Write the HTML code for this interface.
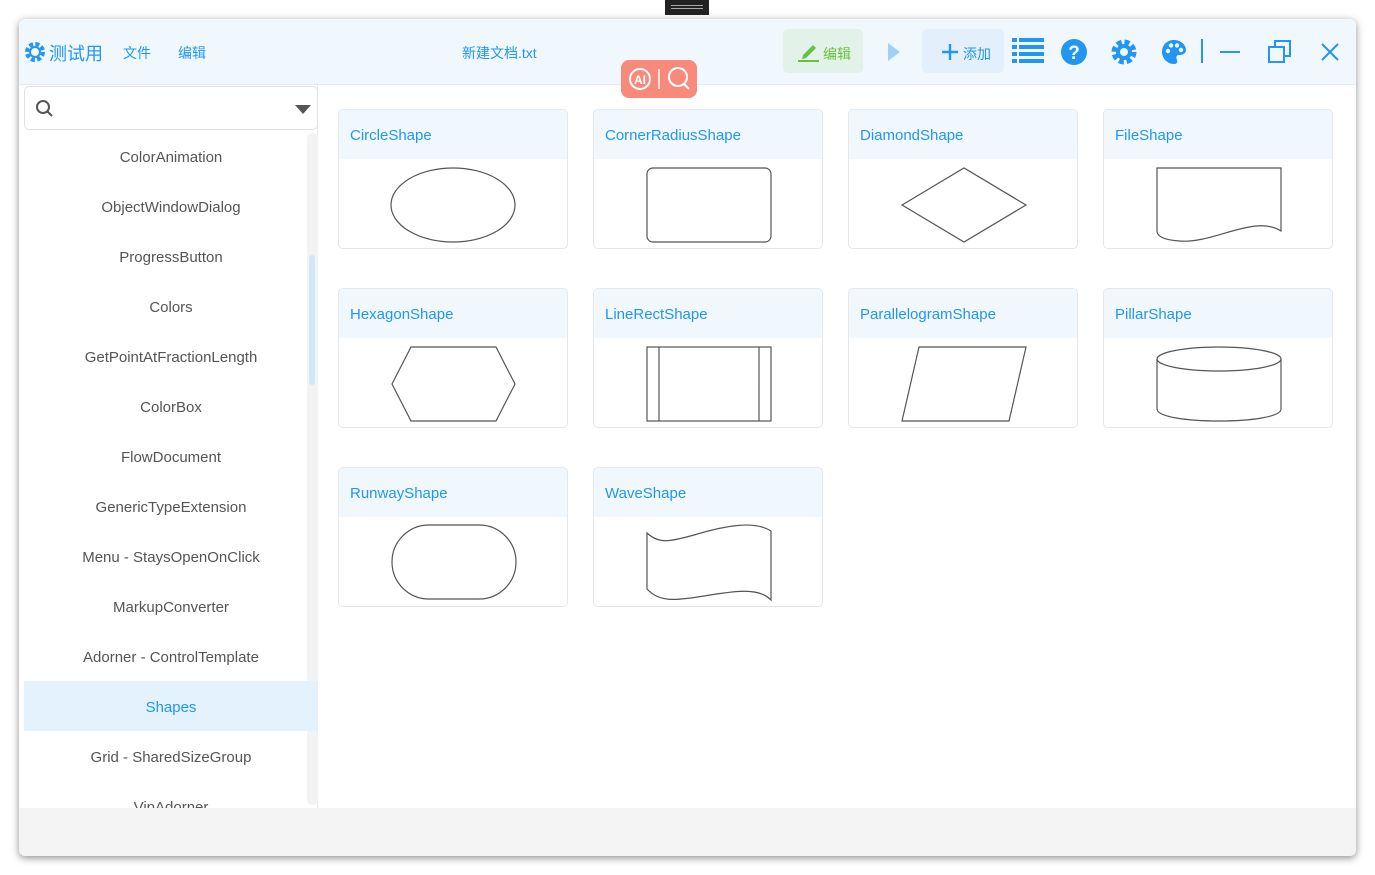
<!DOCTYPE html>
<html><head><meta charset="utf-8"><style>
*{box-sizing:border-box;margin:0;padding:0}
body{width:1375px;height:875px;background:#fff;position:relative;overflow:hidden;font-family:"Liberation Sans","Noto Sans CJK SC",sans-serif}
.win{position:absolute;left:19px;top:19px;width:1337px;height:837px;background:#f4f4f4;border-radius:6px;box-shadow:0 2px 8px rgba(0,0,0,.45);overflow:hidden}
.hdr{position:absolute;left:0;top:0;width:1337px;height:66px;background:#f0f8fe;border-bottom:1px solid #e3ecf3}
.main{position:absolute;left:0;top:66px;width:1337px;height:723px;background:#fff}
.side{position:absolute;left:5px;top:0;width:294px;height:723px;border-right:1px solid #e8e8e8}
.search{position:absolute;left:0;top:1px;width:294px;height:44px;border:1px solid #e2e2e2;border-radius:5px;background:#fff}
.item{position:absolute;left:0;width:294px;height:50px;line-height:54px;text-align:center;font-size:15px;color:#555}
.item.sel{background:#e3f2fd;color:#2196f3}
.card{position:absolute;width:230px;height:140px;border:1px solid #e3e8ee;border-radius:5px;background:#fff;overflow:hidden}
.card .t{height:49px;background:#f0f8fe;color:#2196f3;font-size:15px;line-height:52px;padding-left:11px}
.card svg{position:absolute;left:0;top:49px}
.hb{position:absolute;color:#2196f3;font-size:14px}
</style></head><body>
<div style="position:absolute;left:665px;top:0;width:44px;height:15px;background:#222"><div style="position:absolute;left:6px;top:5px;width:32px;height:4px;border-top:1px solid #aaa;border-bottom:1px solid #aaa"></div></div>
<div class="win">
<div class="hdr">
<svg style="position:absolute;left:4px;top:21px" width="24" height="24" viewBox="0 0 24 24"><circle cx="12" cy="12" r="8" fill="none" stroke="#2196f3" stroke-width="4" stroke-dasharray="4 2.3"/><circle cx="12" cy="12" r="5" fill="none" stroke="#2196f3" stroke-width="2"/></svg>
<div class="hb" style="left:30px;top:21px;font-size:18px">测试用</div>
<div class="hb" style="left:104px;top:24px">文件</div>
<div class="hb" style="left:159px;top:24px">编辑</div>
<div class="hb" style="left:443px;top:24px">新建文档.txt</div>
<div style="position:absolute;left:764px;top:10px;width:80px;height:44px;background:#e3f2e8;border-radius:5px"></div>
<svg style="position:absolute;left:778px;top:20px" width="24" height="24" viewBox="0 0 24 24"><path d="M6 16 L16 6 L19 9 L9 19 L5 20 Z" fill="#6abf40"/><rect x="1" y="21" width="21" height="2" fill="#6abf40"/></svg>
<div class="hb" style="left:804px;top:25px;color:#6abf40">编辑</div>
<svg style="position:absolute;left:868px;top:23px" width="14" height="20"><path d="M1 1 L13 10 L1 19Z" fill="#9fd0f8"/></svg>
<div style="position:absolute;left:903px;top:10px;width:82px;height:44px;background:#e3f0fc;border-radius:5px"></div>
<svg style="position:absolute;left:922px;top:24px" width="18" height="18"><path d="M9 1 V17 M1 9 H17" stroke="#2196f3" stroke-width="2.4"/></svg>
<div class="hb" style="left:944px;top:25px">添加</div>
<svg style="position:absolute;left:993px;top:19px" width="32" height="26"><g fill="#2196f3"><rect x="0" y="0" width="5" height="4"/><rect x="7" y="0" width="25" height="4"/><rect x="0" y="7" width="5" height="4"/><rect x="7" y="7" width="25" height="4"/><rect x="0" y="14" width="5" height="4"/><rect x="7" y="14" width="25" height="4"/><rect x="0" y="21" width="5" height="4"/><rect x="7" y="21" width="25" height="4"/></g></svg>
<svg style="position:absolute;left:1041px;top:19px" width="28" height="28"><circle cx="14" cy="14" r="13" fill="#2196f3"/><text x="14" y="21" text-anchor="middle" font-size="19" font-weight="bold" fill="#fff" font-family="Liberation Sans">?</text></svg>
<svg style="position:absolute;left:1091px;top:19px" width="28" height="28" viewBox="0 0 28 28"><circle cx="14" cy="14" r="9" fill="none" stroke="#2196f3" stroke-width="7" stroke-dasharray="4.5 2.6"/><circle cx="14" cy="14" r="8" fill="#2196f3"/><circle cx="14" cy="14" r="4" fill="#f0f8fe"/></svg>
<svg style="position:absolute;left:1142px;top:20px" width="26" height="26" viewBox="0 0 26 26"><path d="M13 1 C20 1 25 6 25 11 C25 15 21 16 18 16 C15 16 15 19 16 21 C17 24 15 25 13 25 C6 25 1 19 1 13 C1 6 6 1 13 1Z" fill="#2196f3"/><circle cx="7" cy="12" r="2.2" fill="#f0f8fe"/><circle cx="10" cy="6.5" r="2.2" fill="#f0f8fe"/><circle cx="16" cy="6.5" r="2.2" fill="#f0f8fe"/><circle cx="20" cy="11" r="2.2" fill="#f0f8fe"/></svg>
<div style="position:absolute;left:1182px;top:20px;width:2px;height:24px;background:#2196f3"></div>
<div style="position:absolute;left:1201px;top:32px;width:20px;height:2px;background:#2196f3"></div>
<svg style="position:absolute;left:1249px;top:21px" width="24" height="24"><rect x="1" y="7" width="15" height="15" fill="none" stroke="#2196f3" stroke-width="2"/><path d="M7 7 V1 H22 V16 H16" fill="none" stroke="#2196f3" stroke-width="2"/></svg>
<svg style="position:absolute;left:1302px;top:24px" width="18" height="18"><path d="M1 1 L17 17 M17 1 L1 17" stroke="#2196f3" stroke-width="2"/></svg>
</div>
<div style="position:absolute;left:602px;top:41px;width:76px;height:38px;background:#f88a7c;border-radius:8px;z-index:5">
<svg width="76" height="38"><circle cx="19" cy="19" r="10" fill="none" stroke="#fff" stroke-width="2"/><text x="19" y="24" text-anchor="middle" font-size="12" fill="#fff" font-family="Liberation Sans" font-weight="bold">AI</text><line x1="38" y1="9" x2="38" y2="29" stroke="#fff" stroke-width="1.5"/><circle cx="57" cy="17" r="9" fill="none" stroke="#fff" stroke-width="2"/><line x1="63" y1="24" x2="68" y2="29" stroke="#fff" stroke-width="2"/></svg></div>
<div class="main">
<div class="side">
<div class="search"><svg style="position:absolute;left:10px;top:12px" width="20" height="20"><circle cx="8" cy="8" r="6" fill="none" stroke="#555" stroke-width="2"/><line x1="12.5" y1="12.5" x2="17" y2="17" stroke="#555" stroke-width="2"/></svg><svg style="position:absolute;left:270px;top:18px" width="16" height="10"><path d="M0 0 H16 L8 9Z" fill="#555"/></svg></div>
<div style="position:absolute;left:283px;top:48px;width:11px;height:672px;background:#f3f3f3;border-radius:5px"></div>
<div style="position:absolute;left:285px;top:170px;width:6px;height:130px;background:#cfe6fb;border-radius:3px"></div>
<div class="item" style="top:46px">ColorAnimation</div>
<div class="item" style="top:96px">ObjectWindowDialog</div>
<div class="item" style="top:146px">ProgressButton</div>
<div class="item" style="top:196px">Colors</div>
<div class="item" style="top:246px">GetPointAtFractionLength</div>
<div class="item" style="top:296px">ColorBox</div>
<div class="item" style="top:346px">FlowDocument</div>
<div class="item" style="top:396px">GenericTypeExtension</div>
<div class="item" style="top:446px">Menu - StaysOpenOnClick</div>
<div class="item" style="top:496px">MarkupConverter</div>
<div class="item" style="top:546px">Adorner - ControlTemplate</div>
<div class="item sel" style="top:596px">Shapes</div>
<div class="item" style="top:646px">Grid - SharedSizeGroup</div>
<div style="position:absolute;left:0;top:696px;width:283px;height:27px;overflow:hidden"><div class="item" style="top:0;width:294px">VipAdorner</div></div>
</div>
</div>
</div>
<div class="card" style="left:338px;top:109px"><div class="t">CircleShape</div><svg width="229" height="90" fill="none" stroke="#555" stroke-width="1.2"><ellipse cx="114" cy="46" rx="62" ry="37"/></svg></div>
<div class="card" style="left:593px;top:109px"><div class="t">CornerRadiusShape</div><svg width="229" height="90" fill="none" stroke="#555" stroke-width="1.2"><rect x="53" y="9" width="124" height="74" rx="6"/></svg></div>
<div class="card" style="left:848px;top:109px"><div class="t">DiamondShape</div><svg width="229" height="90" fill="none" stroke="#555" stroke-width="1.2"><path d="M53 46 L115 9 L177 46 L115 83Z"/></svg></div>
<div class="card" style="left:1103px;top:109px"><div class="t">FileShape</div><svg width="229" height="90" fill="none" stroke="#555" stroke-width="1.2"><path d="M53 9 H177 V72 C150 55 110 85 75 82 C62 81 53 78 53 72Z"/></svg></div>
<div class="card" style="left:338px;top:288px"><div class="t">HexagonShape</div><svg width="229" height="90" fill="none" stroke="#555" stroke-width="1.2"><path d="M53 46 L72 9 H157 L176 46 L157 83 H72Z"/></svg></div>
<div class="card" style="left:593px;top:288px"><div class="t">LineRectShape</div><svg width="229" height="90" fill="none" stroke="#555" stroke-width="1.2"><rect x="53" y="9" width="124" height="74"/><path d="M65 9 V83 M165 9 V83"/></svg></div>
<div class="card" style="left:848px;top:288px"><div class="t">ParallelogramShape</div><svg width="229" height="90" fill="none" stroke="#555" stroke-width="1.2"><path d="M70 9 H177 L160 83 H53Z"/></svg></div>
<div class="card" style="left:1103px;top:288px"><div class="t">PillarShape</div><svg width="229" height="90" fill="none" stroke="#555" stroke-width="1.2"><ellipse cx="115" cy="21" rx="62" ry="12"/><path d="M53 21 V71 C53 87 177 87 177 71 V21"/></svg></div>
<div class="card" style="left:338px;top:467px"><div class="t">RunwayShape</div><svg width="229" height="90" fill="none" stroke="#555" stroke-width="1.2"><rect x="53" y="8" width="124" height="74" rx="37"/></svg></div>
<div class="card" style="left:593px;top:467px"><div class="t">WaveShape</div><svg width="229" height="90" fill="none" stroke="#555" stroke-width="1.2"><path d="M53 16 C65 27 75 25 100 18 C130 9 160 3 177 14 V83 C165 70 140 74 110 79 C80 84 65 85 53 72Z"/></svg></div>
</body></html>
